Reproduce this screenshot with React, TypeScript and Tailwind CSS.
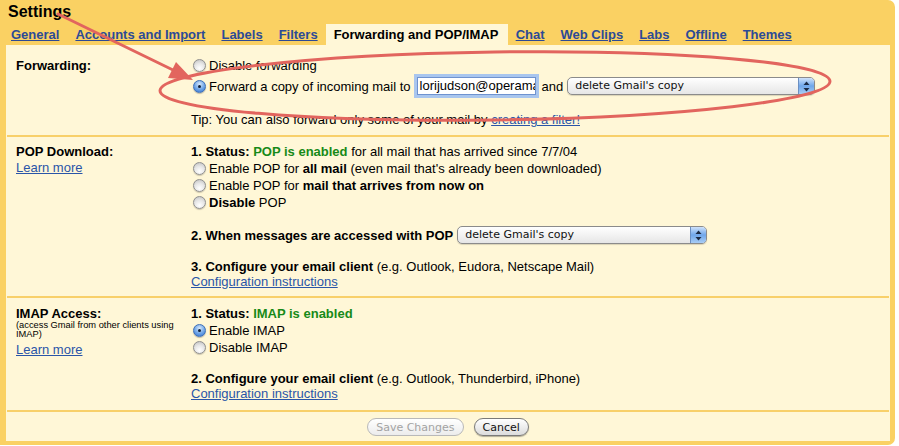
import React from "react";

const tabs = [
  "General",
  "Accounts and Import",
  "Labels",
  "Filters",
  "Forwarding and POP/IMAP",
  "Chat",
  "Web Clips",
  "Labs",
  "Offline",
  "Themes",
];

function Radio({ checked = false }: { checked?: boolean }) {
  return (
    <span
      className={
        checked
          ? "relative inline-block w-[13px] h-[13px] ml-[2px] mr-[3px] shrink-0 rounded-full border border-[#3d6fb8] bg-[radial-gradient(circle_at_50%_30%,#d6e8fb,#6ea4e6_55%,#2f6fcf)] shadow-[0_1px_1px_rgba(0,0,0,0.25)]"
          : "relative inline-block w-[13px] h-[13px] ml-[2px] mr-[3px] shrink-0 rounded-full border border-[#8f8f8f] bg-[radial-gradient(circle_at_50%_75%,#ffffff,#e6e6e6_50%,#bdbdbd)] shadow-[0_1px_1px_rgba(0,0,0,0.2)]"
      }
    >
      {checked && (
        <span className="absolute left-[4px] top-[4px] w-[3px] h-[3px] rounded-full bg-[#10203a]" />
      )}
    </span>
  );
}

function Select({ width }: { width: string }) {
  return (
    <div
      className={`${width} h-[18px] flex items-stretch rounded-[5px] border border-[#8b8b8b] bg-gradient-to-b from-white to-[#e6e6e6] shadow-[0_1px_1px_rgba(0,0,0,0.15)] font-['DejaVu_Sans',sans-serif] text-[11px] leading-[16px]`}
    >
      <span className="flex-1 pl-[7px] text-[#111]">delete Gmail's copy</span>
      <span className="w-[16px] flex items-center justify-center rounded-r-[4px] border-l border-[#6b8fc2] bg-gradient-to-b from-[#cfe2fa] via-[#6fa6ea] to-[#a9cdf5]">
        <svg width="7" height="11" viewBox="0 0 7 11">
          <path d="M3.5 0.5 L6.5 4 H0.5 Z" fill="#1c2a44" />
          <path d="M3.5 10.5 L6.5 7 H0.5 Z" fill="#1c2a44" />
        </svg>
      </span>
    </div>
  );
}

function Button({ label, disabled = false }: { label: string; disabled?: boolean }) {
  return (
    <div
      className={
        disabled
          ? "h-[18px] px-[8px] flex items-center rounded-full border border-[#b9b9b9] bg-gradient-to-b from-white to-[#ececec] text-[#a3a3a3] font-['DejaVu_Sans',sans-serif] text-[11px]"
          : "h-[18px] px-[8px] flex items-center rounded-full border border-[#7a7a7a] bg-gradient-to-b from-white to-[#dcdcdc] shadow-[0_1px_1px_rgba(0,0,0,0.3)] text-[#111] font-['DejaVu_Sans',sans-serif] text-[11px]"
      }
    >
      {label}
    </div>
  );
}

function Link({ children }: { children: React.ReactNode }) {
  return <span className="text-[#2a55a8] underline">{children}</span>;
}

function Separator() {
  return <div className="h-[2px] mx-px bg-[#f8d06a]" />;
}

export default function App() {
  return (
    <div className="relative w-[899px] h-[446px] overflow-hidden bg-white font-['Liberation_Sans',Arial,sans-serif] text-[13px] leading-[17px] text-black">
      <div className="w-[895px] h-[445px] flex flex-col rounded-r-[7px] bg-[#fad163]">
        <div className="h-[24px] pl-[8px] pt-[3px] text-[16px] leading-[18px] font-bold">Settings</div>

        <div className="h-[21px] flex items-stretch pl-[3px]">
          {tabs.map((t) =>
            t === "Forwarding and POP/IMAP" ? (
              <div key={t} className="w-[182px] px-2 flex items-center font-bold bg-[#fff7d7]">
                {t}
              </div>
            ) : (
              <div key={t} className="px-2 flex items-center font-bold text-[#2c4a96] underline">
                {t}
              </div>
            )
          )}
        </div>

        <div className="flex-1 ml-[6px] mr-[5px] mb-[4px] flex flex-col bg-[#fff7d7]">
          {/* Forwarding */}
          <div className="flex pl-[10px] pt-[12px] pb-[7px]">
            <div className="w-[175px] font-bold">Forwarding:</div>
            <div className="flex-1">
              <div className="flex items-center h-[17px]">
                <Radio />
                Disable forwarding
              </div>
              <div className="flex items-center h-[24px]">
                <Radio checked />
                <span>Forward a copy of incoming mail to</span>
                <div className="ml-[6px] w-[119px] h-[18px] overflow-hidden whitespace-nowrap border border-[#6f93cf] bg-white pl-[2px] leading-[16px] shadow-[0_0_0_3px_#a9c6ee]">
                  lorijudson@operama
                </div>
                <span className="ml-[6px]">and</span>
                <div className="ml-[4px]">
                  <Select width="w-[248px]" />
                </div>
              </div>
              <div className="mt-[13px]">
                Tip: You can also forward only some of your mail by <Link>creating a filter!</Link>
              </div>
            </div>
          </div>
          <Separator />

          {/* POP */}
          <div className="flex pl-[10px] pt-[6px] pb-[6px]">
            <div className="w-[175px]">
              <div className="font-bold">POP Download:</div>
              <div className="-mt-px">
                <Link>Learn more</Link>
              </div>
            </div>
            <div className="flex-1">
              <div>
                <b>1. Status: </b>
                <b className="text-[#178a17]">POP is enabled</b> for all mail that has arrived since 7/7/04
              </div>
              <div className="flex items-center h-[17px]">
                <Radio />
                <span>
                  Enable POP for <b>all mail</b> (even mail that's already been downloaded)
                </span>
              </div>
              <div className="flex items-center h-[17px]">
                <Radio />
                <span>
                  Enable POP for <b>mail that arrives from now on</b>
                </span>
              </div>
              <div className="flex items-center h-[17px]">
                <Radio />
                <span>
                  <b>Disable</b> POP
                </span>
              </div>
              <div className="flex items-center h-[18px] mt-[15px]">
                <b>2. When messages are accessed with POP</b>
                <div className="ml-[4px]">
                  <Select width="w-[250px]" />
                </div>
              </div>
              <div className="mt-[14px]">
                <b>3. Configure your email client</b> (e.g. Outlook, Eudora, Netscape Mail)
              </div>
              <div className="-mt-[2px]">
                <Link>Configuration instructions</Link>
              </div>
            </div>
          </div>
          <Separator />

          {/* IMAP */}
          <div className="flex pl-[10px] pt-[7px] pb-[8px]">
            <div className="w-[175px]">
              <div className="font-bold">IMAP Access:</div>
              <div className="-mt-px mb-[2px] text-[9.3px] leading-[9px]">
                (access Gmail from other clients using
                <br />
                IMAP)
              </div>
              <Link>Learn more</Link>
            </div>
            <div className="flex-1">
              <div>
                <b>1. Status: </b>
                <b className="text-[#178a17]">IMAP is enabled</b>
              </div>
              <div className="flex items-center h-[17px]">
                <Radio checked />
                Enable IMAP
              </div>
              <div className="flex items-center h-[17px]">
                <Radio />
                Disable IMAP
              </div>
              <div className="mt-[14px]">
                <b>2. Configure your email client</b> (e.g. Outlook, Thunderbird, iPhone)
              </div>
              <div className="-mt-[2px]">
                <Link>Configuration instructions</Link>
              </div>
            </div>
          </div>
          <Separator />

          <div className="flex justify-center gap-[10px] pt-[6px]">
            <Button label="Save Changes" disabled />
            <Button label="Cancel" />
          </div>
        </div>
      </div>

      {/* red annotation drawn over the screenshot */}
      <svg
        className="absolute inset-0 pointer-events-none"
        width="899"
        height="446"
        viewBox="0 0 899 446"
      >
        <line x1="58" y1="14" x2="173" y2="70" stroke="#e2655e" strokeWidth="3" strokeLinecap="round" />
        <path d="M193 80 L168 78 L176 62 Z" fill="#e2655e" />
        <ellipse
          cx="495"
          cy="86"
          rx="335"
          ry="34"
          fill="none"
          stroke="#e2655e"
          strokeWidth="3"
          transform="rotate(-0.8 495 86)"
        />
      </svg>
    </div>
  );
}
